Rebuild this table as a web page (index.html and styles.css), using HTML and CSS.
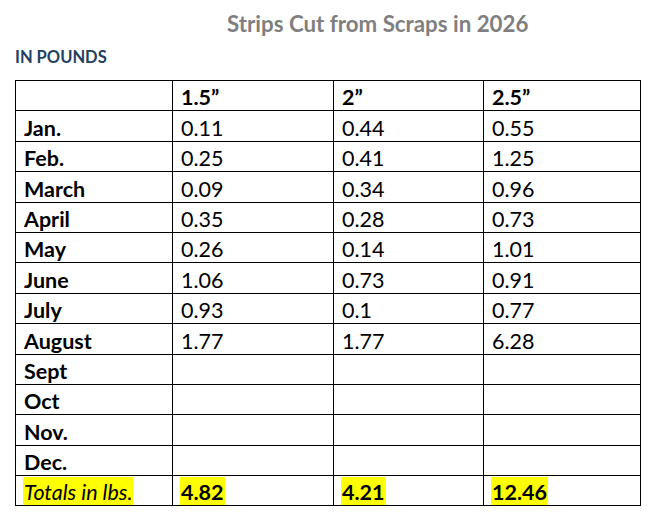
FILE: index.html
```html
<!DOCTYPE html>
<html>
<head>
<meta charset="utf-8">
<link rel="stylesheet" href="styles.css">
</head>
<body>
<div class="page">
  <h1 class="title">Strips Cut from Scraps in 2026</h1>
  <h2 class="subtitle">IN POUNDS</h2>
  <table class="data">
    <colgroup>
      <col class="c0"><col class="c1"><col class="c2"><col class="c3">
    </colgroup>
    <tr class="head"><td></td><td>1.5&rdquo;</td><td>2&rdquo;</td><td>2.5&rdquo;</td></tr>
    <tr><td class="month">Jan.</td><td>0.11</td><td>0.44</td><td>0.55</td></tr>
    <tr><td class="month">Feb.</td><td>0.25</td><td>0.41</td><td>1.25</td></tr>
    <tr><td class="month">March</td><td>0.09</td><td>0.34</td><td>0.96</td></tr>
    <tr><td class="month">April</td><td>0.35</td><td>0.28</td><td>0.73</td></tr>
    <tr><td class="month">May</td><td>0.26</td><td>0.14</td><td>1.01</td></tr>
    <tr><td class="month">June</td><td>1.06</td><td>0.73</td><td>0.91</td></tr>
    <tr><td class="month">July</td><td>0.93</td><td>0.1</td><td>0.77</td></tr>
    <tr><td class="month">August</td><td>1.77</td><td>1.77</td><td>6.28</td></tr>
    <tr><td class="month">Sept</td><td></td><td></td><td></td></tr>
    <tr><td class="month">Oct</td><td></td><td></td><td></td></tr>
    <tr><td class="month">Nov.</td><td></td><td></td><td></td></tr>
    <tr><td class="month">Dec.</td><td></td><td></td><td></td></tr>
    <tr class="totals"><td><span class="hl label">Totals in lbs.</span></td><td><span class="hl">4.82</span></td><td><span class="hl">4.21</span></td><td><span class="hl">12.46</span></td></tr>
  </table>
</div>
</body>
</html>
```

FILE: styles.css
```css
html, body {
  margin: 0;
  padding: 0;
  background: #ffffff;
}
.page {
  font-family: Lato, "Open Sans", sans-serif;
  color: #000;
  padding: 0 0 0 15px;
}
.title {
  margin: 0;
  padding: 11px 0 0 212px;
  font-size: 22.3px;
  line-height: 26px;
  font-weight: 700;
  color: #7f7f7f;
}
.subtitle {
  margin: 0;
  padding-top: 9px;
  font-size: 16.5px;
  line-height: 22px;
  font-weight: 700;
  color: #243f60;
}
.data {
  margin-top: 12px;
  border-collapse: collapse;
  width: 625px;
  table-layout: fixed;
  font-size: 21.5px;
}
.c0 { width: 157px; }
.c1 { width: 161px; }
.c2 { width: 150px; }
.c3 { width: 157px; }
.data td {
  border: 1px solid #000;
  height: 29.4px;
  padding: 0 0 0 8px;
  line-height: 26px;
  vertical-align: bottom;
  white-space: nowrap;
}
.head td, .month, .totals td {
  font-weight: 700;
}
.totals td {
  padding-left: 7px;
}
.totals .label {
  font-style: italic;
  font-weight: 400;
}
.hl {
  background: #ffff00;
  display: inline-block;
  vertical-align: bottom;
  line-height: 26px;
  padding: 2px 1px 0;
}
```
